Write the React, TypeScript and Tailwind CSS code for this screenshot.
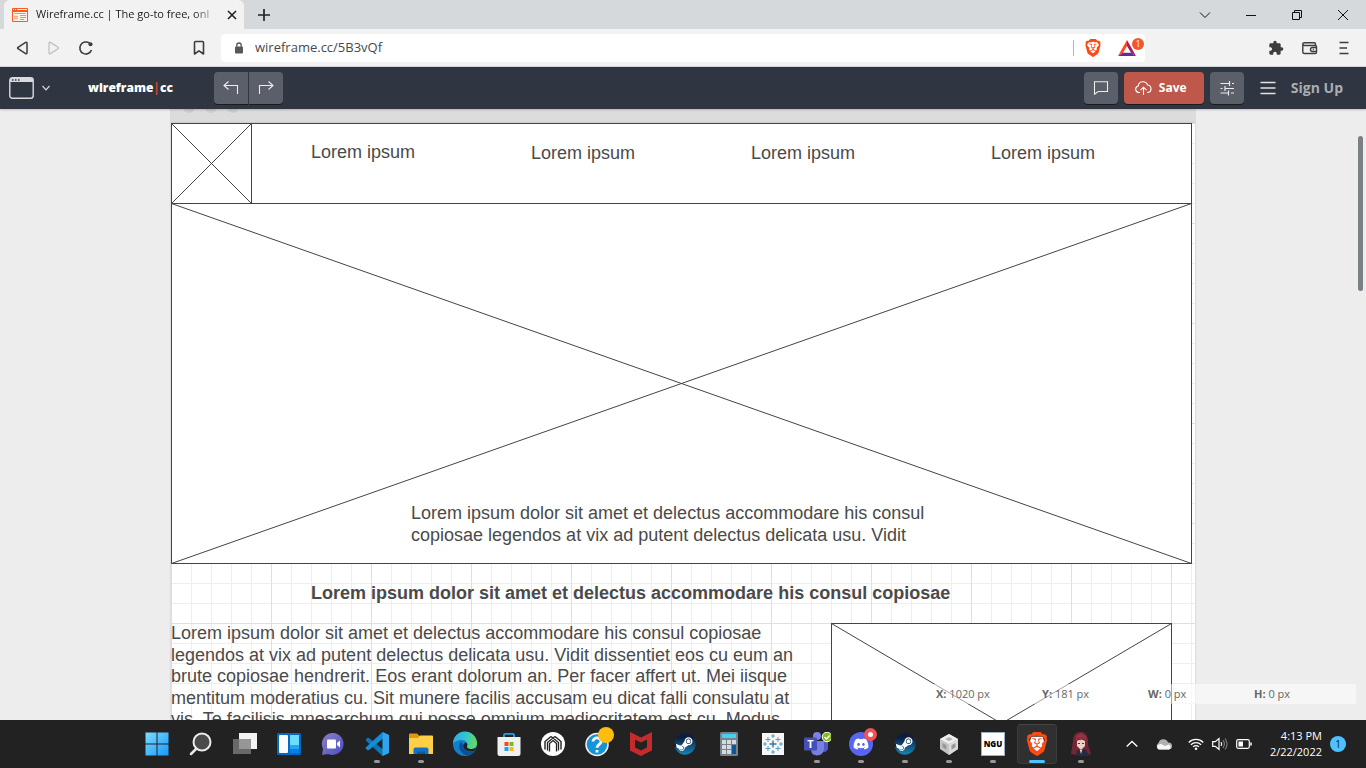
import type { ReactNode } from "react";
import { SiBrave } from "react-icons/si";
import { FaDiscord, FaSteam } from "react-icons/fa6";

/* ---------- Browser chrome ---------- */

function CaptionButton({ label, children }: { label: string; children: ReactNode }) {
  return (
    <button type="button" aria-label={label} className="flex h-full w-[46px] items-center justify-center text-[#111]">
      <svg width="12" height="12" viewBox="0 0 12 12" fill="none" stroke="currentColor" strokeWidth="1">
        {children}
      </svg>
    </button>
  );
}

function BraveMark({ className }: { className: string }) {
  return (
    <span className={"relative grid place-items-center " + className}>
      <svg viewBox="0 0 24 24" className="absolute size-full p-px">
        <path d="M6 4h12l2 6-2 8-6 4-6-4-2-8Z" fill="#fff" />
      </svg>
      <SiBrave className="relative size-full text-[#fb4a14]" />
    </span>
  );
}

function TabStrip() {
  return (
    <div className="flex h-[29px] shrink-0 bg-[#d5d9dc] pl-1">
      <div className="flex w-60 items-center rounded-t-md bg-[#f2f2f2] pl-2">
        <svg width="16" height="14" viewBox="0 0 16 14" className="shrink-0">
          <rect width="16" height="14" rx="1" fill="#fb5a1e" />
          <rect x="1" y="4" width="14" height="9" fill="#fff3ec" />
          <path d="M1 1.500h1M3 1.500h1M5 1.500h10" stroke="#fff" />
          <path d="M2.500 5.500h11" stroke="#fb8a5e" strokeWidth="1" />
          <path d="M2 8.500h4M2 10.500h4" stroke="#fba98a" strokeWidth="1.500" />
          <path d="M8 7.500h6M8 9.500h6M8 11.500h4" stroke="#fb8a5e" />
        </svg>
        <span className="ml-2 w-[183px] whitespace-nowrap font-['Open_Sans',sans-serif] text-[11px] text-[#222] [mask-image:linear-gradient(to_right,#000_86%,transparent)]">
          Wireframe.cc | The go-to free, onl
        </span>
        <button type="button" aria-label="Close tab" className="ml-2 text-[#222]">
          <svg width="10" height="10" viewBox="0 0 10 10" stroke="currentColor" strokeWidth="1.600">
            <path d="M1 1l8 8M9 1l-8 8" />
          </svg>
        </button>
      </div>
      <button type="button" aria-label="New tab" className="ml-2 flex w-6 items-center justify-center text-[#222]">
        <svg width="12" height="12" viewBox="0 0 12 12" stroke="currentColor" strokeWidth="1.700">
          <path d="M6 0v12M0 6h12" />
        </svg>
      </button>
      <div className="ml-auto flex">
        <CaptionButton label="Search tabs"><path d="M1 3.500l5 5 5-5" /></CaptionButton>
        <CaptionButton label="Minimize"><path d="M1 6.500h10" /></CaptionButton>
        <CaptionButton label="Restore"><path d="M1.500 3.500h7v7h-7zM3.500 3.500v-2h7v7h-2" /></CaptionButton>
        <CaptionButton label="Close"><path d="M1 1l10 10M11 1L1 11" /></CaptionButton>
      </div>
    </div>
  );
}

function AddressRow() {
  return (
    <div className="flex h-[38px] shrink-0 items-center border-b border-[#d3d9df] bg-[#f2f2f2] pr-[14px] text-[#3b3d40]">
      <div className="flex pl-[6px]">
        <button type="button" aria-label="Back" className="flex w-8 justify-center">
          <svg width="14" height="16" viewBox="0 0 14 16" fill="none" stroke="currentColor" strokeWidth="1.500" strokeLinejoin="round">
            <path d="M12 3.200v9.600c0 .8-.8 1.200-1.400.8L3 8.700c-.6-.4-.6-1 0-1.400l7.600-4.900c.6-.4 1.400 0 1.400.8Z" />
          </svg>
        </button>
        <button type="button" aria-label="Forward" className="flex w-8 justify-center text-[#bfbfbf]">
          <svg width="14" height="16" viewBox="0 0 14 16" fill="none" stroke="currentColor" strokeWidth="1.300" strokeLinejoin="round">
            <path d="M2 3.200v9.600c0 .8.800 1.200 1.400.8L11 8.700c.6-.4.600-1 0-1.400L3.400 2.400C2.800 2 2 2.400 2 3.200Z" />
          </svg>
        </button>
        <button type="button" aria-label="Reload" className="flex w-8 justify-center">
          <svg width="16" height="16" viewBox="0 0 16 16" fill="none" stroke="currentColor" strokeWidth="1.600">
            <path d="M13.500 10A6 6 0 1 1 11.500 3.200" />
            <circle cx="12.500" cy="4.200" r="2" fill="currentColor" stroke="none" />
          </svg>
        </button>
      </div>
      <button type="button" aria-label="Bookmark this tab" className="ml-[87px] mr-3 flex w-5 justify-center">
        <svg width="12" height="16" viewBox="0 0 12 16" fill="none" stroke="currentColor" strokeWidth="1.600" strokeLinejoin="round">
          <path d="M1.500 2.500c0-.6.400-1 1-1h7c.6 0 1 .4 1 1V14L6 10.800 1.500 14Z" />
        </svg>
      </button>
      <div className="mr-[123px] flex h-7 flex-1 items-center rounded bg-white pl-[13px] pr-[9px]">
        <svg width="10" height="12" viewBox="0 0 10 12" className="shrink-0 text-[#54585c]">
          <rect x="1" y="4.500" width="8" height="7" rx="1" fill="currentColor" />
          <path d="M2.800 5V3.200a2.200 2.200 0 0 1 4.400 0V5" fill="none" stroke="currentColor" strokeWidth="1.300" />
        </svg>
        <input
          aria-label="Address"
          defaultValue="wireframe.cc/5B3vQf"
          className="ml-[11px] min-w-0 flex-1 bg-transparent font-['Open_Sans',sans-serif] text-[13px] text-[#46494d] outline-none"
        />
        <span className="h-4 w-px bg-[#b5b5b5]" />
        <button type="button" aria-label="Brave Shields" className="ml-[10px]">
          <BraveMark className="size-[18px]" />
        </button>
        <button type="button" aria-label="Brave Rewards, 1 notification" className="relative ml-4 h-7 w-[18px]">
          <svg width="18" height="16" viewBox="0 0 18 16">
            <path d="M9 0L0 16l5-3.300L9 6Z" fill="#ff4724" />
            <path d="M9 0l9 16-5-3.300L9 6Z" fill="#9e1f63" />
            <path d="M0 16h18l-5-3.300H5Z" fill="#662d91" />
          </svg>
          <span className="absolute -right-2 top-1 grid size-3 place-items-center rounded-full bg-[#fb542b] font-['Open_Sans',sans-serif] text-[9px] leading-none text-white">
            1
          </span>
        </button>
      </div>
      <div className="flex gap-[18px]">
        <button type="button" aria-label="Extensions">
          <svg width="16" height="16" viewBox="0 0 24 24" fill="currentColor">
            <path d="M20.500 11H19V7c0-1.100-.9-2-2-2h-4V3.500a2.500 2.500 0 0 0-5 0V5H4c-1.100 0-2 .9-2 2v3.800h1.500a2.700 2.700 0 0 1 0 5.400H2V20c0 1.100.9 2 2 2h3.800v-1.500a2.700 2.700 0 0 1 5.400 0V22H17c1.100 0 2-.9 2-2v-4h1.500a2.500 2.500 0 0 0 0-5Z" />
          </svg>
        </button>
        <button type="button" aria-label="Wallet">
          <svg width="16" height="16" viewBox="0 0 16 16" fill="none" stroke="currentColor" strokeWidth="1.400">
            <path d="M13.500 5.500V4c0-.8-.5-1.300-1.300-1.300H2.400C1.400 2.700.8 3.200.8 4v8c0 1 .6 1.500 1.600 1.500h10.800c.8 0 1.300-.5 1.300-1.300V6.800c0-.8-.5-1.300-1.300-1.300H2.400C1.400 5.500.8 5 .8 4" />
            <path d="M14.500 7.500h-4a2 2 0 0 0 0 4h4M10.800 9.500h1" />
          </svg>
        </button>
        <button type="button" aria-label="Menu">
          <svg width="16" height="16" viewBox="0 0 16 16" fill="none" stroke="currentColor" strokeWidth="1.600">
            <path d="M3.500 2.500h9M3.500 8h7.500M3.500 13.500h9" />
          </svg>
        </button>
      </div>
    </div>
  );
}

/* ---------- Wireframe.cc editor ---------- */

function ToolButton({ label, shape, children }: { label: string; shape: string; children: ReactNode }) {
  return (
    <button
      type="button"
      aria-label={label}
      className={"flex h-8 w-[34px] items-center justify-center bg-[#5b5f69] text-[#ececec] shadow-[0_1px_0_#1a1c20] " + shape}
    >
      {children}
    </button>
  );
}

function EditorHeader() {
  return (
    <header className="relative z-10 flex h-[42px] shrink-0 items-center bg-[#2f3541] pl-[9px] pr-[23px] font-['Open_Sans',sans-serif] shadow-[0_1px_2px_#0003]">
      <button type="button" aria-label="Choose canvas" className="flex items-center gap-2 text-[#d9dadd]">
        <svg width="25" height="22" viewBox="0 0 25 22" fill="none">
          <rect x="0.800" y="0.800" width="23.400" height="20.400" rx="2.500" stroke="currentColor" strokeWidth="1.400" />
          <path d="M1 5V3Q1 1 3 1h19q2 0 2 2v2Z" fill="currentColor" />
          <path d="M3 3h1.500M6 3h1.500M9 3h1.500" stroke="#2f3541" strokeWidth="1.500" />
        </svg>
        <svg width="8" height="6" viewBox="0 0 8 6" fill="none" stroke="currentColor" strokeWidth="1.200">
          <path d="M.5 1L4 4.800 7.500 1" />
        </svg>
      </button>
      <a href="#home" className="ml-[38px] w-[126px] text-xs font-extrabold text-white">
        wireframe<span className="font-semibold text-[#e0503c]">|</span>cc
      </a>
      <div className="flex gap-px">
        <ToolButton label="Undo" shape="rounded-l-sm">
          <svg width="16" height="14" viewBox="0 0 16 14" fill="none" stroke="currentColor" strokeWidth="1.100">
            <path d="M5.500.5L1 4.500l4.500 4M1 4.500h13.500V13" />
          </svg>
        </ToolButton>
        <ToolButton label="Redo" shape="rounded-r-sm">
          <svg width="16" height="14" viewBox="0 0 16 14" fill="none" stroke="currentColor" strokeWidth="1.100">
            <path d="M10.500.5l4.500 4-4.500 4M15 4.500H1.500V13" />
          </svg>
        </ToolButton>
      </div>
      <div className="ml-auto flex items-center gap-1.5">
        <ToolButton label="Comments" shape="rounded-sm">
          <svg width="16" height="14" viewBox="0 0 16 14" fill="none" stroke="currentColor" strokeWidth="1.100">
            <path d="M1.500.8h13v9.700H5.200L1.500 13.200Z" />
          </svg>
        </ToolButton>
        <button
          type="button"
          className="flex h-8 w-20 items-center rounded-sm bg-[#bd584a] pl-[11px] text-xs font-bold text-white shadow-[0_1px_0_#1a1c20]"
        >
          <svg width="17" height="14" viewBox="0 0 17 14" fill="none" stroke="currentColor" strokeWidth="1.100" className="mr-[7px]">
            <path d="M5 11.500H4A3.300 3.300 0 0 1 3.200 5 4.800 4.800 0 0 1 12.500 4a3.800 3.800 0 0 1 .5 7.500h-1M8.500 14V6.500M5.500 9.200l3-3 3 3" />
          </svg>
          Save
        </button>
        <ToolButton label="Settings" shape="rounded-sm">
          <svg width="14" height="16" viewBox="0 0 14 16" fill="none" stroke="currentColor" strokeWidth="1.200">
            <path d="M.5 3.500h9M12 3.500h2M9.500 1v5M.5 8.500h2M5 8.500h9M5 6v5M.5 13h8M11 13h3M8.500 10.500V15.500" />
          </svg>
        </ToolButton>
        <button type="button" aria-label="Menu" className="ml-2.5 text-[#e3e3e3]">
          <svg width="16" height="14" viewBox="0 0 16 14" stroke="currentColor" strokeWidth="1.300">
            <path d="M.5 1.500h15M.5 7h15M.5 12.500h15" />
          </svg>
        </button>
        <a href="#signup" className="ml-[9px] text-sm font-bold text-[#abadb0]">Sign Up</a>
      </div>
    </header>
  );
}

/* A crossed box; top-left corner sits on the canvas grid. */
function Placeholder({ className, width, height }: { className: string; width: number; height: number }) {
  return (
    <svg width={width} height={height} viewBox={`0 0 ${width} ${height}`} className={"absolute " + className}>
      <rect x="0.500" y="0.500" width={width - 1} height={height - 1} fill="#fff" stroke="#444" />
      <path d={`M.5 .5L${width - 0.5} ${height - 0.5}M${width - 0.5} .5L.5 ${height - 0.5}`} stroke="#444" />
    </svg>
  );
}

function Readout({ name, value }: { name: string; value: string }) {
  return (
    <span className="w-[106px] pl-2.5">
      <b>{name}:</b> {value}
    </span>
  );
}

function Canvas() {
  return (
    <main className="relative min-h-0 flex-1 overflow-hidden bg-[#ededed]">
      <div className="mx-auto h-full w-[1026px]">
        <div className="h-[14px] overflow-hidden bg-[#dcdcdc] pl-[13px]">
          <div className="-mt-2 flex gap-[10px]">
            <span className="size-3 rounded-full bg-[#cdcdcd]" />
            <span className="size-3 rounded-full bg-[#cdcdcd]" />
            <span className="size-3 rounded-full bg-[#cdcdcd]" />
          </div>
        </div>
        <div className="relative mx-px h-full bg-white bg-[linear-gradient(#dfdfdf_1px,transparent_1px),linear-gradient(90deg,#dfdfdf_1px,transparent_1px),linear-gradient(#eee_1px,transparent_1px),linear-gradient(90deg,#eee_1px,transparent_1px)] bg-[size:100px_100px,100px_100px,20px_20px,20px_20px] font-['Liberation_Sans',Arial,sans-serif] text-lg leading-[1.2] text-[#4a4a4a] shadow-[0_0_2px_#0003]">
          <div className="absolute left-0 top-0 h-[81px] w-[1021px] border border-[#444] bg-white" />
          <Placeholder className="left-0 top-0" width={81} height={81} />
          <Placeholder className="left-0 top-20" width={1021} height={361} />
          <p className="absolute left-[140px] top-[19px]">Lorem ipsum</p>
          <p className="absolute left-[360px] top-5">Lorem ipsum</p>
          <p className="absolute left-[580px] top-5">Lorem ipsum</p>
          <p className="absolute left-[820px] top-5">Lorem ipsum</p>
          <p className="absolute left-[240px] top-[380px] w-[540px]">
            Lorem ipsum dolor sit amet et delectus accommodare his consul copiosae legendos at vix ad putent delectus
            delicata usu. Vidit
          </p>
          <h1 className="absolute left-[140px] top-[460px] whitespace-nowrap font-bold">
            Lorem ipsum dolor sit amet et delectus accommodare his consul copiosae
          </h1>
          <p className="absolute left-0 top-[500px] w-[640px]">
            Lorem ipsum dolor sit amet et delectus accommodare his consul copiosae legendos at vix ad putent delectus
            delicata usu. Vidit dissentiet eos cu eum an brute copiosae hendrerit. Eos erant dolorum an. Per facer affert
            ut. Mei iisque mentitum moderatius cu. Sit munere facilis accusam eu dicat falli consulatu at vis. Te facilisis
            mnesarchum qui posse omnium mediocritatem est cu. Modus
          </p>
          <Placeholder className="left-[660px] top-[500px]" width={341} height={201} />
        </div>
      </div>
      <div className="absolute right-[3px] top-[27px] h-[155px] w-[5px] rounded-full bg-[#7b7f86]" />
      <div className="absolute bottom-4 right-2.5 flex h-5 w-[430px] items-center bg-white/50 font-['Open_Sans',sans-serif] text-[11px] text-[#666]">
        <Readout name="X" value="1020 px" />
        <Readout name="Y" value="181 px" />
        <Readout name="W" value="0 px" />
        <Readout name="H" value="0 px" />
      </div>
    </main>
  );
}

/* ---------- Taskbar ---------- */

function SteamIcon() {
  return (
    <span className="relative grid size-[22px] place-items-center">
      <span className="absolute size-[19px] rounded-full bg-white" />
      <svg width="0" height="0" className="absolute">
        <linearGradient id="steam" x1="0" y1="0" x2="0" y2="1">
          <stop offset="0.200" stopColor="#0d1d3f" />
          <stop offset="1" stopColor="#1387b8" />
        </linearGradient>
      </svg>
      <FaSteam fill="url(#steam)" className="relative size-[22px]" />
    </span>
  );
}

function Glyph({ children }: { children: ReactNode }) {
  return <svg width="24" height="24" viewBox="0 0 24 24" className="overflow-visible">{children}</svg>;
}

type App = { name: string; icon: ReactNode; running?: boolean; active?: boolean };

const apps: App[] = [
  {
    name: "Start",
    icon: (
      <Glyph>
        <linearGradient id="win" gradientUnits="userSpaceOnUse" x1="0" y1="0" x2="24" y2="24">
          <stop stopColor="#7fdcff" />
          <stop offset="1" stopColor="#1497fa" />
        </linearGradient>
        <path d="M.5.5H11.500V11.500H.5ZM12.500.5h11v11h-11ZM.5 12.500h11v11H.5ZM12.500 12.500h11v11h-11Z" fill="url(#win)" />
      </Glyph>
    ),
  },
  {
    name: "Search",
    icon: (
      <Glyph>
        <path d="M7.500 16.500L2 22" stroke="#e8e8e8" strokeWidth="2.500" strokeLinecap="round" />
        <circle cx="13" cy="10" r="8.500" fill="#4b4b4b" stroke="#ececec" strokeWidth="2" />
      </Glyph>
    ),
  },
  {
    name: "Task view",
    icon: (
      <Glyph>
        <path d="M6 1h18v16H6z" fill="#f3f3f3" />
        <path d="M0 7h18v15H0z" fill="#696969" />
        <path d="M6 7h12v10H6z" fill="#969696" />
      </Glyph>
    ),
  },
  {
    name: "Widgets",
    icon: (
      <Glyph>
        <rect y="1" width="24" height="22" rx="1.500" fill="#0868bd" />
        <rect x="2" y="3" width="9" height="18" rx="1" fill="#fafafa" />
        <path d="M13 3h9v10h-9z" fill="#6cdcff" />
        <path d="M13 13h9v4h-9z" fill="#20a6ff" />
        <path d="M13 17h9v4h-9z" fill="#0680e4" />
      </Glyph>
    ),
  },
  {
    name: "Chat",
    icon: (
      <Glyph>
        <linearGradient id="chat" x1="0" y1="0" x2="1" y2="1">
          <stop stopColor="#8d7fc4" />
          <stop offset="1" stopColor="#4b4fc6" />
        </linearGradient>
        <path d="M12 1a11 11 0 1 1-5 21L1 23l1-6A11 11 0 0 1 12 1Z" fill="url(#chat)" />
        <rect x="6" y="7.500" width="9" height="9" rx="1" fill="#fff" />
        <path d="M16 11l3-2.500v7L16 13Z" fill="#fff" />
      </Glyph>
    ),
  },
  {
    name: "Visual Studio Code",
    running: true,
    icon: (
      <Glyph>
        <path d="M17.500 0L24 3v18l-6.500 3L1 8.800.8 7.200 2.700 5.800 4 6l14 11.500Z" fill="#0a77bb" />
        <path d="M18 6.500L4 18l-1.300.2L.8 16.800 1 15.200 17.500 0l.5 6Z" fill="#128dd8" />
        <path d="M17.500 0L24 3v18l-6.500 3Z" fill="#2ea5ee" />
      </Glyph>
    ),
  },
  {
    name: "File Explorer",
    running: true,
    icon: (
      <Glyph>
        <path d="M0 2.500Q0 1.500 1 1.500h7L10.500 4H22v4H0Z" fill="#dd9b08" />
        <path d="M0 6h9l2-2.500h12q1 0 1 1V22H0Z" fill="#ffcf48" />
        <path d="M4.500 22v-4.500q0-2 2-2h11q2 0 2 2V22Z" fill="#1273c4" />
        <path d="M8 19.500h8V22H8Z" fill="#0c5b9f" />
      </Glyph>
    ),
  },
  {
    name: "Microsoft Edge",
    icon: (
      <Glyph>
        <linearGradient id="edge" x1="0" y1="0.300" x2="1" y2="0.500">
          <stop stopColor="#2ca9e7" />
          <stop offset="0.500" stopColor="#34c4cf" />
          <stop offset="1" stopColor="#64dc58" />
        </linearGradient>
        <circle cx="12" cy="12" r="12" fill="#137fcb" />
        <path d="M0 12A12 12 0 0 1 24 11c0 4-3 6-6 6-3.500 0-5-1.500-4-3 1.500-2.500-1-6-5-6-4.500 0-8 2-9 4Z" fill="url(#edge)" />
        <path d="M8 9.500c-4 4-1 12.500 6 14 4-.5 7-2.500 8.500-5.500C17 21 9.500 19 10 13Z" fill="#0c4f98" />
        <path d="M10.300 13.500c0-1.500 1-2.500 2.500-3 1.600 1 2 2.200 1.300 3.500-1 2 1.900 3.300 4.900 3 2-.1 3.500-.7 4.500-1.400l-1.700 3C17 20 10 19 10.300 13.500Z" fill="#202020" />
      </Glyph>
    ),
  },
  {
    name: "Microsoft Store",
    icon: (
      <Glyph>
        <path d="M7 6V3q0-1.200 1.200-1.200h7.600Q17 1.800 17 3v3" fill="none" stroke="#229fe8" strokeWidth="1.800" />
        <path d="M.5 5h23v16.500q0 2.500-2.500 2.500H3Q.5 24 .5 21.500Z" fill="#f0f0f0" />
        <path d="M7.500 10H11.500v4h-4z" fill="#e64f27" />
        <path d="M12.500 10h4v4h-4z" fill="#7aba1d" />
        <path d="M7.500 15h4v4h-4z" fill="#1ea2ea" />
        <path d="M12.500 15h4v4h-4z" fill="#fdb813" />
      </Glyph>
    ),
  },
  {
    name: "Audio hub",
    icon: (
      <Glyph>
        <circle cx="12" cy="12" r="12" fill="#fff" />
        <path d="M4 17.500V9.500L10 4.500" fill="none" stroke="#222" strokeWidth="1.400" />
        <path d="M20 17.500V9.500L14 4.500" fill="none" stroke="#222" strokeWidth="1.400" />
        <path d="M10 4.500L12 6l2-1.500M6.500 18.500V10.500L12 6l5.500 4.500v8M8.500 19.500v-8L12 8.500l3.500 3v8" fill="none" stroke="#222" strokeWidth="1.300" />
      </Glyph>
    ),
  },
  {
    name: "Get help",
    icon: (
      <Glyph>
        <circle cx="12" cy="12.500" r="11" fill="#1295d5" stroke="#eee" strokeWidth="1.500" />
        <path d="M8 9.500C8 4.500 16.500 5 16 9.800c-.2 2.500-4 2.700-4 6M12 18v2.500" fill="none" stroke="#fff" strokeWidth="2.800" />
        <circle cx="21" cy="3" r="8" fill="#ffbd12" />
      </Glyph>
    ),
  },
  {
    name: "McAfee",
    icon: (
      <Glyph>
        <path d="M1 0l11 5.500L23 0v18.500L12 24 1 18.500Z" fill="#c62b2c" />
        <path d="M6 7.500l6 3 6-3V15.500l-6 3-6-3Z" fill="#222" />
      </Glyph>
    ),
  },
  { name: "Steam", icon: <SteamIcon /> },
  {
    name: "Calculator",
    icon: (
      <Glyph>
        <rect x="3" width="18" height="24" rx="1.500" fill="#78828b" />
        <path d="M5 2h14v4H5z" fill="#43d3ee" />
        <path d="M5 8h4v4H5zM10 8h4v4h-4zM15 8h4v4h-4zM5 13h4v4H5zM10 13h4v4h-4zM5 18h4v4H5zM10 18h4v4h-4z" fill="#d5dadf" />
        <path d="M15 13h4v9h-4z" fill="#0c559f" />
      </Glyph>
    ),
  },
  {
    name: "Tableau",
    icon: (
      <Glyph>
        <path d="M1 1h22v22H1z" fill="#f6f6f6" />
        <path d="M12 8.500v7M8.500 12h7" stroke="#33759c" strokeWidth="1.400" />
        <path
          d="M12 2v4M10 4h4M12 18v4M10 20h4M2 12h4M4 10v4M18 12h4M20 10v4M7 5v5M4.500 7.500h5M17 5v5M14.500 7.500h5M7 14v5M4.500 16.500h5M17 14v5M14.500 16.500h5"
          stroke="#5b9dbe"
        />
      </Glyph>
    ),
  },
  {
    name: "Microsoft Teams",
    running: true,
    icon: (
      <svg width="28" height="24" viewBox="0 0 28 24">
        <circle cx="14" cy="4" r="4" fill="#7b83eb" />
        <path d="M18 9h7v8q-2 4-7 3Z" fill="#5059c9" />
        <path d="M8 9h13v8q-1 6.500-7 6.500T8 17Z" fill="#7780df" />
        <rect x="1" y="5.500" width="13" height="13" rx="1" fill="#464eb8" />
        <text x="7.500" y="16" textAnchor="middle" fontSize="11" fontWeight="700" fontFamily="Open Sans" fill="#fff">T</text>
        <circle cx="24" cy="5" r="4.800" fill="#86ba14" stroke="#fff" />
        <path d="M21.500 5l2 2 3.200-3.500" fill="none" stroke="#fff" strokeWidth="1.400" />
      </svg>
    ),
  },
  {
    name: "Discord",
    running: true,
    icon: (
      <span className="relative grid size-6 place-items-center rounded-full bg-[#5865f2] text-white">
        <FaDiscord className="size-4" />
        <span className="absolute -right-1 -top-1 grid size-[13px] place-items-center rounded-full bg-[#ee5355]">
          <span className="size-[5px] rounded-full bg-white" />
        </span>
      </span>
    ),
  },
  { name: "Steam library", running: true, icon: <SteamIcon /> },
  {
    name: "Unity Hub",
    running: true,
    icon: (
      <Glyph>
        <path d="M12 2l9 5v10l-9 6-9-6V7Z" fill="#c4c4c4" />
        <path d="M12 2l9 5-9 5-9-5Z" fill="#efefef" />
        <path d="M12 12l9-5v10l-9 6Z" fill="#dadada" />
        <path d="M12 5l4 2-4 2.300L8 7Z" fill="#b5b5b5" />
        <path d="M5.500 11l4 2.200v4.500l-4-2.500ZM18.500 11l-4 2.200v4.500l4-2.500Z" fill="#979797" />
      </Glyph>
    ),
  },
  {
    name: "NGU",
    running: true,
    icon: (
      <span className="grid size-6 place-items-center border border-[#9ab0bd] bg-white font-['Open_Sans',sans-serif] text-[8px] font-extrabold leading-none text-black">
        NGU
      </span>
    ),
  },
  { name: "Brave", running: true, active: true, icon: <BraveMark className="size-6" /> },
  {
    name: "Character game",
    running: true,
    icon: (
      <Glyph>
        <path d="M12 0C6 0 4 4 4 9L2 22l6 1h10l4-1-3-9c1-8-2-13-7-13Z" fill="#762535" />
        <path d="M8 9q4-3 8 0v5l-4 4-4-4Z" fill="#eed1c6" />
        <path d="M7 10l3-5 1 4 2-4 1 4 1-3 3 5-1-7-5-3-5 3Z" fill="#933347" />
        <path d="M9 11.500h2M13 11.500h2" stroke="#632" />
        <path d="M8 18l4 1 4-2 5 7H7Z" fill="#252b43" />
        <path d="M11 18l2 0-1 4Z" fill="#eee" />
      </Glyph>
    ),
  },
];

function TaskbarButton({ name, icon, running, active }: App) {
  return (
    <button
      type="button"
      aria-label={name}
      className={
        active
          ? "relative mx-0.5 grid h-10 w-10 place-items-center rounded border border-[#3c3c3c] border-t-[#454545] bg-[#303030]"
          : "relative mx-0.5 grid h-10 w-10 place-items-center"
      }
    >
      {icon}
      {running && (
        <span
          className={
            active
              ? "absolute inset-x-0 bottom-0 mx-auto h-[3px] w-4 rounded-full bg-[#4cc2ff]"
              : "absolute inset-x-0 bottom-px mx-auto h-[3px] w-1.5 rounded-full bg-[#999]"
          }
        />
      )}
    </button>
  );
}

function Taskbar() {
  return (
    <footer className="flex h-12 shrink-0 items-center bg-[#222] font-['Open_Sans',sans-serif] text-white">
      <nav aria-label="Taskbar" className="ml-auto flex">
        {apps.map((app) => (
          <TaskbarButton key={app.name} {...app} />
        ))}
      </nav>
      <div className="flex w-[263px] items-center pl-4">
        <button type="button" aria-label="Show hidden icons" className="flex w-[26px] justify-center">
          <svg width="12" height="8" viewBox="0 0 12 8" fill="none" stroke="currentColor" strokeWidth="1.300">
            <path d="M.7 6.500L6 1.500l5.300 5" />
          </svg>
        </button>
        <button type="button" aria-label="OneDrive" className="flex w-[38px] justify-center">
          <svg width="16" height="11" viewBox="0 0 16 11">
            <path d="M4 10.500A3.500 3.500 0 0 1 2.500 4 5 5 0 0 1 12 3.500a3.500 3.500 0 0 1 1 7Z" fill="#b0b0b0" />
            <path d="M2.500 10.500a2.700 2.700 0 0 1 .5-5Q5 4.500 7 6l2.500 1 3-1.500a2.600 2.600 0 0 1 .5 5Z" fill="#f6f6f6" />
          </svg>
        </button>
        <button type="button" aria-label="Wi-Fi" className="flex w-[26px] justify-center">
          <svg width="16" height="12" viewBox="0 0 16 12" fill="none" stroke="currentColor" strokeWidth="1.300">
            <path d="M.7 4.500a10.300 10.300 0 0 1 14.600 0M2.900 6.700a7.200 7.200 0 0 1 10.200 0M5.100 8.900a4.100 4.100 0 0 1 5.800 0" />
            <circle cx="8" cy="10.700" r="1.300" fill="currentColor" stroke="none" />
          </svg>
        </button>
        <button type="button" aria-label="Volume" className="flex w-[22px] justify-center">
          <svg width="16" height="14" viewBox="0 0 16 14" fill="none" stroke="currentColor" strokeWidth="1.200">
            <path d="M.7 4.700h2.600L7 1.500v11L3.300 9.300H.7ZM9 5q1.500 2 0 4" />
            <path d="M11 3.200q2.800 3.800 0 7.600M13 1.500q4 5.500 0 11" stroke="#777" />
          </svg>
        </button>
        <button type="button" aria-label="Battery" className="flex w-[26px] justify-center">
          <svg width="16" height="10" viewBox="0 0 16 10" fill="none" stroke="currentColor" strokeWidth="1.200">
            <rect x="0.700" y="0.700" width="12.600" height="8.600" rx="1.500" />
            <path d="M2.500 2.500H7v5H2.500Z" fill="currentColor" stroke="none" />
            <path d="M15 3.500v3" strokeWidth="1.500" />
          </svg>
        </button>
        <button type="button" className="flex w-[65px] flex-col items-end whitespace-nowrap text-[11px] leading-4">
          <span>4:13 PM</span>
          <span>2/22/2022</span>
        </button>
        <button type="button" className="ml-2 grid size-4 place-items-center rounded-full bg-[#4cc2ff] text-[10px] leading-none text-[#123]">
          1
        </button>
      </div>
    </footer>
  );
}

export default function App() {
  return (
    <div className="flex h-screen flex-col overflow-hidden">
      <TabStrip />
      <AddressRow />
      <EditorHeader />
      <Canvas />
      <Taskbar />
    </div>
  );
}
